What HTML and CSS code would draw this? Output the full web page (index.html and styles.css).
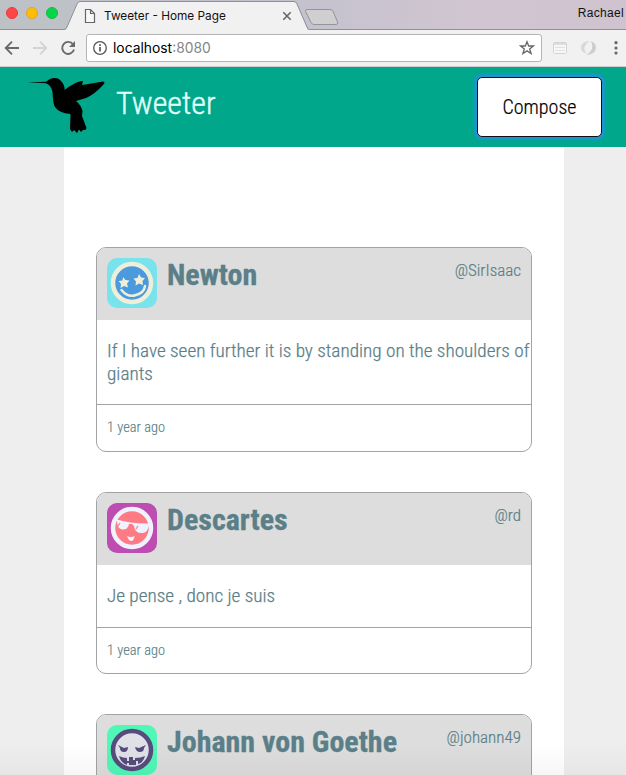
FILE: index.html
```html
<!DOCTYPE html>
<html lang="en">
<head>
<meta charset="utf-8">
<title>Tweeter - Home Page</title>
<link rel="stylesheet" href="styles.css">
</head>
<body>
<div class="window">
  <div class="tabstrip">
    <svg class="tabshape" width="350" height="30" viewBox="0 0 350 30">
      <path d="M0 29.5H66L77 4Q78 1.5 80 1.5H294Q296 1.5 297 4L307.500 29.500H350V30H0Z" fill="#f1f1f1"/>
      <path d="M0 29.500H63Q66 29.500 67 27L77 4Q78 1.500 80 1.500H294Q296 1.500 297 4L307 27Q308 29.500 310 29.500H350" fill="none" stroke="#8f8f95"/>
      <path d="M307 9.500H330Q332 9.500 333 11L337.500 22Q338.500 24.500 336 24.500H314Q312 24.500 311 22.500L305.500 11.500Q305 9.500 307 9.500Z" fill="#cfcfcf" stroke="#949499"/>
    </svg>
    <div class="lights"><i class="light red"></i><i class="light yellow"></i><i class="light green"></i></div>
    <svg class="page-icon" width="12" height="16" viewBox="0 0 12 16"><path d="M1.500 1.500H6.500L10.500 5.500V14.500H1.500ZM6.500 1.500V5.500H10.500" fill="#f8f8f8" stroke="#666" stroke-width="1.200"/></svg>
    <span class="tab-title">Tweeter - Home Page</span>
    <svg class="tab-close" width="10" height="10" viewBox="0 0 10 10"><path d="M1.300 1.300L8.700 8.700M8.700 1.300L1.300 8.700" stroke="#666" stroke-width="1.600"/></svg>
    <span class="user">Rachael</span>
  </div>
  <div class="toolbar">
    <svg class="nav" width="86" height="36" viewBox="0 0 86 36" fill="none" stroke="#6a6a6a" stroke-width="1.900">
      <path d="M19 18H6M12 11.700L5.700 18L12 24.300"/>
      <path d="M33 18H46M40 11.700L46.300 18L40 24.300" stroke="#d3d3d3"/>
      <path d="M73 14.300A6 6 0 1 0 74 19.500" /><path d="M75 11V17H69Z" fill="#6a6a6a" stroke="none"/>
    </svg>
    <div class="address">
      <svg width="16" height="16" viewBox="0 0 16 16"><circle cx="8" cy="8" r="6.300" fill="none" stroke="#555" stroke-width="1.300"/><path d="M8 7V11.500M8 4.300V5.900" stroke="#555" stroke-width="1.700"/></svg>
      <span class="host">localhost</span><span class="port">:8080</span>
      <svg class="star" width="16" height="16" viewBox="0 0 16 16"><path d="M8 1.700L9.700 6H14.300L10.700 8.900L12.100 13.600L8 10.900L3.900 13.600L5.300 8.900L1.700 6H6.300Z" fill="none" stroke="#666" stroke-width="1.300"/></svg>
    </div>
    <svg class="extensions" width="84" height="36" viewBox="0 0 84 36">
      <rect x="11.500" y="12.500" width="13" height="11" rx="1" fill="#f7f7f7" stroke="#d4d4d4"/><path d="M11 14H25" stroke="#d4d4d4" stroke-width="1.500"/><path d="M13 17.500H23M13 20.500H23" stroke="#e2e2e2"/>
      <path d="M48 11Q39 11 39 18Q39 23 45 23Q41 20 43 16Q44 13 48 11Z" fill="#d8d8d8"/><path d="M44 25Q53 25 54 18Q54 13 49 11Q51 15 50 19Q48 23 44 25Z" fill="#cdcdcd"/>
      <g fill="#666"><circle cx="74" cy="12.700" r="1.600"/><circle cx="74" cy="18" r="1.600"/><circle cx="74" cy="23" r="1.600"/></g>
    </svg>
  </div>
  <header class="navbar">
    <svg class="bird" width="80" height="58" viewBox="0 0 80 58"><path d="M0 4.500L19 3.700Q22 1 25 .3Q31-1 34 3Q38 7 37.500 12Q41 9 45 7Q51 3 56 3L55 7Q66 5 76 3.500Q79 4 76 7Q68 16 59 20L49 23Q54 27 55.500 33L55 38L59.500 50L58.500 52H56L54 54L52 51.500L50 55L47 52L45 54L43 51L43.500 36Q32 35 28 29Q26 26 25.500 14Q24 7 19 5.300Z" fill="#000"/></svg>
    <h1>Tweeter</h1>
    <button class="compose">Compose</button>
  </header>
  <main class="container">
    <article class="tweet">
      <header class="tweet-head">
        <svg class="avatar" width="50" height="50" viewBox="0 0 50 50"><rect width="50" height="50" rx="10" fill="#79e3ed"/><circle cx="25" cy="25" r="19" fill="#4b9add" stroke="#efefd9" stroke-width="4.500"/><path d="M16 19L18.500 22L22.500 22.500L20 25.500L21 29.500L17 28L13.500 30L14 26L11.500 23L15.500 22.500ZM32 16L34 19.500L38 20L35.500 23L36 27L32 25.500L28.500 27.500L29 23.500L26.500 20.500L30.500 20Z" fill="#efefd9"/><path d="M14.500 32Q21 40 29 37Q37 35 38 28" fill="none" stroke="#efefd9" stroke-width="2.500" stroke-linecap="round"/></svg>
        <h2>Newton</h2><span class="handle">@SirIsaac</span>
      </header>
      <p class="content">If I have seen further it is by standing on the shoulders of<br>giants</p>
      <footer>1 year ago</footer>
    </article>
    <article class="tweet">
      <header class="tweet-head">
        <svg class="avatar" width="50" height="50" viewBox="0 0 50 50"><rect width="50" height="50" rx="10" fill="#bd4db0"/><circle cx="25" cy="25" r="19" fill="#ff7b83" stroke="#f0f2ff" stroke-width="4.500"/><path d="M8 16Q25 21 42 20.500L42 22Q41 29 36 30Q28 31 27 23Q25 20 22 21Q21 27 15 26.500Q10 25 10 18Z" fill="#f0f2ff"/><path d="M13 20L11 23M31 23L29 26" stroke="#ff7b83" stroke-width="1.200"/><path d="M20 33Q24 35 27.500 33Q27 38 24 38Q21 37 20 33Z" fill="#f0f2ff"/></svg>
        <h2>Descartes</h2><span class="handle">@rd</span>
      </header>
      <p class="content">Je pense , donc je suis</p>
      <footer>1 year ago</footer>
    </article>
    <article class="tweet">
      <header class="tweet-head">
        <svg class="avatar" width="50" height="50" viewBox="0 0 50 50"><rect width="50" height="50" rx="10" fill="#50f8b7"/><circle cx="25" cy="25" r="19" fill="#e0e0e8" stroke="#574c7d" stroke-width="4.500"/><path d="M11 20L17 23L21 22Q21 27 17 27Q13 27 13 23ZM39 20L32 23L28 22Q29 27 33 27Q37 27 37 23ZM12 31Q16 33 20 33V36H22V32H26V35H28V33Q34 33 38 31Q36 38 31 39V36H29V40H22V38H20V40Q14 38 12 31Z" fill="#574c7d"/></svg>
        <h2>Johann von Goethe</h2><span class="handle">@johann49</span>
      </header>
    </article>
  </main>
  <div class="bottom-shade"></div>
</div>
</body>
</html>
```

FILE: styles.css
```css
* { box-sizing: border-box; }
body { margin: 0; font-family: "Roboto Condensed", Roboto, sans-serif; font-stretch: 75%; font-weight: 300; color: #5b7f88; }
h1, h2, p { margin: 0; }
.window { width: 626px; height: 775px; overflow: hidden; position: relative; background: #eee; }
.tabstrip { position: relative; height: 30px; display: flex; align-items: center; padding: 2px 2px 0 6px; background: linear-gradient(90deg, #bdc1c5, #c3c2cd 45%, #d0c5d1 75%, #cec3cf); border-bottom: 1px solid #929096; font: 400 11.800px Inter, sans-serif; color: #111; }
.tabshape { position: absolute; left: 0; top: 0; }
.lights, .page-icon, .tab-title, .tab-close { position: relative; }
.lights { display: flex; gap: 8px; margin-top: -6px; }
.light { width: 12px; height: 12px; border-radius: 50%; }
.red { background: #ff4545; border: 1px solid #e53c3f; }
.yellow { background: #ffbd09; border: 1px solid #dfa51c; }
.green { background: #05d64a; border: 1px solid #12bc42; }
.page-icon { margin-left: 26px; }
.tab-title { margin-left: 8px; width: 171px; white-space: nowrap; }
.tab-close { margin-left: 7px; }
.user { margin-left: auto; margin-top: -5px; font: 12px "Liberation Sans", sans-serif; letter-spacing: .3px; }
.toolbar { height: 37px; display: flex; background: #f1f1f1; border-bottom: 1px solid #cfcfcf; }
.address { width: 456px; height: 28px; margin-top: 4px; border: 1px solid #b4b4b4; border-radius: 3px; background: #fff; display: flex; align-items: center; padding: 0 6px 0 5px; font: 13.850px Inter, sans-serif; color: #000; }
.host { margin-left: 5px; }
.port { color: #858585; }
.star { margin-left: auto; }
.navbar { height: 80px; background: #00a78b; display: flex; align-items: flex-start; }
.bird { margin: 11px 0 0 27px; overflow: visible; }
h1 { margin: 17px 0 0 9px; font-size: 32px; line-height: 39px; font-weight: 300; color: #e2fffb; -webkit-text-stroke: .4px; }
.compose { margin: 10px 24px 0 auto; width: 125px; height: 60px; border: 1px solid #111; border-radius: 5px; background: #fff; box-shadow: 0 0 2px 3px #1996d0; font: inherit; font-size: 20px; color: #000; -webkit-text-stroke: .2px; }
.container { width: 500px; height: 628px; margin: 0 auto 0 64px; padding: 100px 32px 0; background: #fff; }
.tweet { height: 205px; border: 1px solid #a2a3a5; border-radius: 10px; overflow: hidden; margin-bottom: 40px; }
.tweet:nth-child(2) { height: 182px; }
.tweet-head { height: 72px; display: flex; align-items: flex-start; padding: 10px; background: #ddd; }
h2 { margin-left: 10px; font-size: 30px; line-height: 33px; font-weight: 700; -webkit-text-stroke: .3px; }
.handle { margin-left: auto; font-size: 17px; line-height: 24px; -webkit-text-stroke: .2px; }
.content { min-height: 63px; padding: 19px 0 19px 10px; font-size: 19.200px; line-height: 23px; white-space: nowrap; border-bottom: 1px solid #a2a3a5; -webkit-text-stroke: .25px; }
footer { padding: 14px 10px; font-size: 14.400px; line-height: 18px; -webkit-text-stroke: .15px; }
.bottom-shade { position: absolute; left: 0; right: 0; bottom: 0; height: 32px; background: linear-gradient(transparent, rgba(0,0,0,.035)); }
```
